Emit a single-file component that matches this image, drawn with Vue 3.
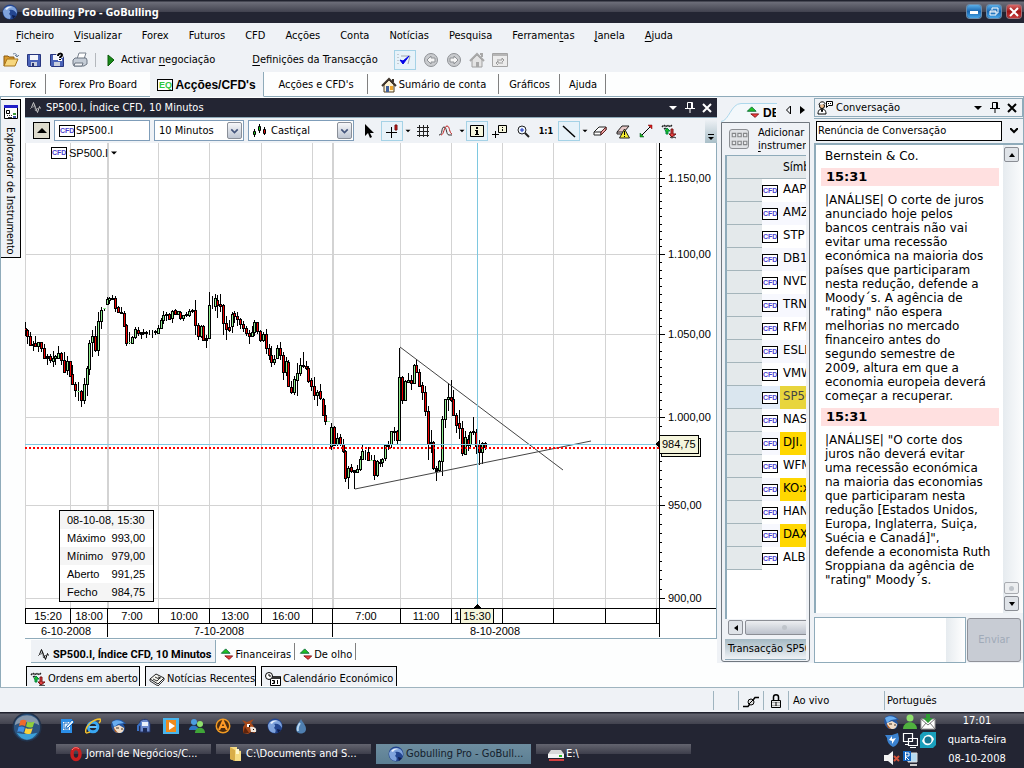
<script setup>
import { h, ref } from 'vue'

const shapes = {
  globe: '<circle cx="8" cy="8" r="7.5" fill="#23458f"/><path d="M1 7c2-5 7-6 11-4 3 2 3 5 3 7-2-4-5-5-8-4 2 1 1 3 0 4 2 1 2 3 1 5C4 15 1 12 1 7z" fill="#7fa3dc"/><path d="M3 5c2-3 6-3 8-2-3 0-5 1-6 3z" fill="#e6eefb"/><path d="M10 11l4 1-3 3z" fill="#0d1d4d"/>',
  folder: '<path d="M1 14V4h4l1 1h5v3" fill="#d99a2c" stroke="#8a5a10"/><path d="M1 14l3-7h11l-3 7z" fill="#f7d77e" stroke="#a87418"/><path d="M10 2c2-1 4 0 4 2m-2-1l2 2 2-2" fill="none" stroke="#6b7f9a"/>',
  disk: '<path d="M1.500 2.500h13v12h-12l-1-1z" fill="#4a63b8" stroke="#27357e"/><path d="M4 3h8v5H4z" fill="#f4f6fb"/><path d="M5 10h6v4H5z" fill="#c9cfdd"/><path d="M6 11h2v3H6z" fill="#28346f"/>',
  diskq: '<path d="M1.500 2.500h13v12h-12l-1-1z" fill="#4a63b8" stroke="#27357e"/><path d="M4 3h8v5H4z" fill="#f4f6fb"/><path d="M5 10h6v4H5z" fill="#c9cfdd"/><path d="M9 4c0-3 4-3 4-1 0 2-2 1-2 3m0 1v2" stroke="#fff" stroke-width="4" fill="none"/><path d="M9 4c0-3 4-3 4-1 0 2-2 1-2 3m0 1v1" stroke="#000" stroke-width="2" fill="none"/>',
  printer: '<path d="M5 7l2-6h7l-2 6" fill="#fff" stroke="#78828e"/><path d="M1 8l2-2h11l1 2v4l-3 2H2l-1-2z" fill="#c4ccd6" stroke="#6d7683"/><path d="M3 11h8l-1 3H2z" fill="#f2f4f7" stroke="#6d7683"/>',
  play: '<path d="M5 3l6 5-6 6z" fill="#188a18" stroke="#0a5a0a"/>',
  check: '<path d="M1 2v1m0 2v1m0 2v1m0 2v1M4 4h9l-2 8" stroke="#a0a4aa" fill="none"/><path d="M3 8l3 4 6-8-6 5z" fill="#0000e8" stroke="#0000e8"/>',
  back: '<circle cx="8" cy="8" r="6.500" fill="#c9cbce" stroke="#8f9296"/><path d="M4 8l4-4v2h4v4H8v2z" fill="#f5f5f5" stroke="#8f9296"/>',
  fwd: '<circle cx="8" cy="8" r="6.500" fill="#c9cbce" stroke="#8f9296"/><path d="M12 8L8 4v2H4v4h4v2z" fill="#f5f5f5" stroke="#8f9296"/>',
  homeg: '<path d="M3 8v7h10V8L8 3z" fill="#e4e4e4" stroke="#a0a0a0"/><path d="M1 9l7-7 7 7M11 2h2v3" stroke="#a8a8a8" stroke-width="2" fill="none"/><path d="M7 10h3v5H7z" fill="#a8a8a8"/>',
  refresh: '<path d="M.5 1.500h15v13H.5z" fill="#ececec" stroke="#a4a4a4"/><path d="M1 2h14v2H1z" fill="#b6b6b6"/><path d="M5 8h5V6l2 2-2 2M11 11H6V9l-2 2 2 2" stroke="#9a9a9a" fill="none"/>',
  home: '<path d="M3 8v7h10V8L8 3z" fill="#fff3d2" stroke="#4a3a20"/><path d="M1 9l7-7 7 7M12 2v3" stroke="#3e352c" stroke-width="2" fill="none"/><path d="M5 9h3v6H5z" fill="#3f5f9a"/><path d="M9 9h3v4H9z" fill="#efa52a"/>',
  wave: '<path d="M3.500 8.500l1-1 2-5 2 5 2 5 2-6 1 2" fill="none" stroke="currentColor"/><path d="M5.500 8l2-3 1 6 2-3 1 2" fill="none" stroke="currentColor" opacity=".5"/>',
  pin: '<path d="M5.500 2.500h5v6h-5zM9.500 2v6M3 8.500h10M8 9v4" fill="none" stroke="currentColor"/>',
  close: '<path d="M4 4l8 8M12 4l-8 8" stroke="currentColor" stroke-width="2"/>',
  caret: '<path d="M4 6h8l-4 4z" fill="currentColor"/>',
  up: '<path d="M3 10h10L8 5z" fill="#000"/>',
  down: '<path d="M4 6l4 4 4-4" stroke="#44557c" stroke-width="2" fill="none"/>',
  candles: '<path d="M3.500 6v8M8.500 1v9M13.500 4v8" stroke="#000"/><path d="M7.500 3.500h2v4h-2zM2.500 8.500h2v3h-2z" fill="#19c819" stroke="#000"/><path d="M12.500 6.500h2v4h-2z" fill="#e01010" stroke="#000"/>',
  pointer: '<path d="M4 1v12l3-3 2 5 2-1-2-4h4z" fill="#000"/>',
  cross: '<path d="M7.500 4v11M2 9.500h11" stroke="#000"/><path d="M11 2h2v5h-2z" fill="#d81818" stroke="#701010"/>',
  grid: '<path d="M4.500 2v12M8.500 2v12M12.500 2v12M2 4.500h12M2 8.500h12M2 12.500h12" stroke="#222"/>',
  waves: '<path d="M1 12c4 0 2-8 5-8s2 8 5 8h3" fill="none" stroke="#333"/><path d="M3 12c3 0 3-9 6-9s2 7 5 8" fill="none" stroke="#c02020"/>',
  info: '<path d="M1.500 2.500h13v11h-13z" fill="#f5f5dc" stroke="#000"/><path d="M7 4h2v2H7zM6 7h3v4h1v1H6v-1h1V8H6z" fill="#000"/>',
  boxinfo: '<path d="M6.500 2.500h8v7h-8z" fill="#f5f5dc" stroke="#000"/><path d="M10.500 4v1m0 1v2" stroke="#000"/><path d="M3.500 8v7M0 11.500h7" stroke="#000"/>',
  zoom: '<circle cx="7" cy="7" r="4" fill="#eef6ff" stroke="#222"/><path d="M10 10l4 4" stroke="#222" stroke-width="2"/><path d="M5 7h4M7 5v4" stroke="#1530c0"/>',
  line: '<path d="M2 3l12 11" stroke="#000" stroke-width="1.500"/>',
  eraser: '<path d="M2 9l5-5h7l-5 5zM2 9v3h7l5-5V4M9 9v3" fill="#fff" stroke="#222"/><path d="M9 9l5-5v3l-5 5z" fill="#e8a0a0" stroke="#602020"/>',
  erasewarn: '<path d="M2 9l5-6h7l-5 6zM2 9v2h7" fill="#e8c8c8" stroke="#222"/><path d="M9.500 6l5 9h-10z" fill="#f6ee30" stroke="#222"/><path d="M9.500 8v4m0 1v1" stroke="#000"/>',
  arrows: '<path d="M3 13L13 3" stroke="#000"/><path d="M10 2h4v4z" fill="#d81818" stroke="#711" stroke-width=".5"/><path d="M2 10v4h4z" fill="#18a818" stroke="#052" stroke-width=".5"/>',
  trends: '<path d="M1 4l2-2 2 2 2-2 2 2 2-2M3 6l2-1 2 2" fill="none" stroke="#222" stroke-width="1.500" stroke-dasharray="2 1"/><path d="M4 8l2-3 3 3H7v3H5V8z" fill="#20c020" stroke="#084"/><path d="M10 6h2v5h3l-4 3-3-3h2z" fill="#e04040" stroke="#711"/><path d="M9 14l2 1 2-1 2 1" fill="none" stroke="#222"/>',
  updown: '<path d="M6.500 1l5 5h-10z" fill="#22c322" stroke="#063"/><path d="M10.500 13l4-4h-9z" fill="#f04040" stroke="#711"/>',
  explorer: '<path d="M1.500 1.500h13v13h-13z" fill="#fff" stroke="#000"/><path d="M1 1h14v3H1z" fill="#2020c8"/><path d="M3.500 6.500h3v3h-3z" fill="none" stroke="#000"/><path d="M4 11.500h1m1 0h1m1 0h1M5 13.500h4" stroke="#333"/><path d="M10 9h3v2h-3z" fill="#3a9a3a"/><path d="M10 12h3v2h-3z" fill="#3a50a0"/>',
  chat: '<circle cx="5" cy="6" r="2.500" fill="#f0c090" stroke="#000"/><path d="M2 5c0-4 6-4 6-1M1 14c0-4 2-5 4-5s4 1 4 5zM4 9l1 3 1-3" fill="#fff" stroke="#000"/><path d="M9.500 1.500h6v4h-4l-2 2z" fill="#fff" stroke="#000"/><path d="M11 3.500h4" stroke="#000" stroke-dasharray="1 1"/>',
  gridbtn: '<path d="M2 3h3v3H2zM7 3h3v3H7zM12 3h3v3h-3zM2 10h3v3H2zM7 10h3v3H7zM12 10h3v3h-3z" fill="#e9eaec" stroke="#858789"/>',
  plug: '<path d="M0 13.500h5l7-9h4" fill="none" stroke="#000" stroke-width="1.500"/><circle cx="8" cy="9" r="3" fill="#ddd" stroke="#000"/><path d="M6 11l4-4" stroke="#000"/>',
  lock: '<path d="M3.500 7.500h9v7h-9z" fill="#e8e8e8" stroke="#000"/><path d="M5.500 7V4c0-3 5-3 5 0v3" fill="none" stroke="#000" stroke-width="1.500"/><path d="M4 9.500h8M4 12.500h8" stroke="#aaa"/><path d="M7.500 9h1v4h-1z"/>',
  news: '<path d="M1 8l6-5 8 4-6 6z" fill="#f6f6f0" stroke="#222"/><path d="M1 8v2l8 5 6-6V7M4 8l4 2M6 6l4 2M9 6l3 1M8 10l3-3" fill="none" stroke="#333"/>',
  calendar: '<path d="M5.500 5.500h10v9h-10z" fill="#fff" stroke="#000"/><path d="M6 5h9v3H6z" fill="#333"/><circle cx="4" cy="5" r="3.500" fill="#fff" stroke="#000"/><path d="M4 3v2h2M7 9.500h2.500v3H7m1-1.500h1M12.500 9v4" stroke="#000" fill="none"/>',
  orb: '<circle cx="8" cy="8" r="7.800" fill="#22324a"/><circle cx="8" cy="8" r="7" fill="#2b5480"/><path d="M1.500 7C2 0 14 0 14.500 7 11 5 5 5 1.500 7z" fill="#8597ab"/><path d="M2.500 11c3 5 8 5 11 0-3 1-8 1-11 0z" fill="#3ba0d8"/><path d="M4.500 4.500c1.500-.6 2-.4 3.200.2L7 7.600c-1-.6-2-.6-3.300-.2z" fill="#ee6a2c"/><path d="M8.200 5c1.200.6 2.200.6 3.800 0l-.9 3c-1.300.5-2.500.3-3.600-.3z" fill="#8fcf3c"/><path d="M3.500 8c1.400-.5 2.300-.4 3.300.3L6 11c-1-.6-2-.7-3.200-.3z" fill="#3f8fe8"/><path d="M7.300 8.500c1.200.6 2.300.6 3.700.1l-.9 2.800c-1.300.5-2.500.4-3.600-.2z" fill="#fbd23a"/>',
  mail: '<path d="M2 1h11v14H2z" fill="#2b8ee8"/><path d="M4 4h7v8H4z" fill="#fff"/><path d="M9 5H5v6h5M7 9l6-7 2 2-6 6H7z" fill="#dff0ff" stroke="#1668bd"/>',
  ie: '<circle cx="8" cy="9" r="4.800" fill="none" stroke="#39a7f2" stroke-width="3"/><path d="M4 9h8" stroke="#63c2ff" stroke-width="2"/><path d="M1 15C-1 9 8 1 15 1c1 1 0 3-1 4M1 15c2 0 3-1 4-1" fill="none" stroke="#f3c02c" stroke-width="1.500"/>',
  bird: '<path d="M1 4c3-4 10-4 14 2l-3 0c3 3 2 7-1 9H5C1 13-1 8 1 4z" fill="#24559f"/><path d="M1 4c4-3 9-2 12 1l-6 1-4 3z" fill="#68adf0"/><path d="M3 9l5-2 5 3c0 3-2 5-5 5s-5-3-5-6z" fill="#f1dcc6"/><path d="M5 10h3m2 1h2" stroke="#432"/><path d="M2 9l2 5 3 1z" fill="#ae5c22"/>',
  save: '<path d="M3 3c5-3 9-2 10 3v8H3z" fill="#6c89cc" stroke="#22356b"/><path d="M5 4h6v4H5z" fill="#eaf0fa"/><path d="M6 10h4v4H6z" fill="#1d2b57"/><path d="M1 13V8l3-3" stroke="#3970c4" stroke-width="2" fill="none"/>',
  media: '<path d="M0 0h16v16H0z" fill="#49b5ec"/><path d="M3 2h10v12H3z" fill="#ef8a1c"/><path d="M6 4l6 4-6 4z" fill="#fff"/>',
  people: '<circle cx="5" cy="4" r="3" fill="#4d9fe0"/><path d="M0 12c0-6 9-6 10 0z" fill="#2e77c4"/><circle cx="11" cy="6" r="3" fill="#8fe06d"/><path d="M6 15c0-7 10-7 10 0z" fill="#3fa538"/>',
  orangea: '<circle cx="8" cy="8" r="7.500" fill="#f09a22"/><circle cx="8" cy="8" r="6" fill="#4c2c10"/><path d="M4 12l4-9 4 9M6 9h4" fill="none" stroke="#ff9c28" stroke-width="2"/>',
  donkey: '<path d="M2 15V9l2-3-3-4 5 2 7-3-3 4 2 2 2 4v4l-4-1-3 2z" fill="#a5481a"/><path d="M2 15l2-6 4 6z" fill="#5e240c"/><path d="M9 9c4-1 7 1 6 5l-5 0z" fill="#f1e6dc"/><path d="M6 6h3v3H6z" fill="#fff"/><path d="M8 7h1v2H8zM12 11h1v1h-1z" fill="#000"/>',
  drop: '<path d="M8 1c2 4 5 6 5 10 0 6-10 6-10 0 0-4 3-6 5-10z" fill="#4f7fb0"/><path d="M7 5c-2 3-3 5-2 8" stroke="#b9d6f0" stroke-width="2" fill="none"/>',
  opera: '<ellipse cx="8" cy="8" rx="4" ry="5.500" fill="none" stroke="#c81f1f" stroke-width="3.500"/><path d="M4 4c2-3 5-3 7-1" stroke="#ff8080" fill="none"/>',
  dir: '<path d="M2 1h7v3l4 1v10H7l-5-2z" fill="#f6dc84"/><path d="M2 1l5 3v11l-5-2z" fill="#d9ad48"/><path d="M8 3h3v5H8z" fill="#fff6cc"/>',
  drive: '<path d="M3 4h10l3 4v4H0V8z" fill="#d9d9d9"/><path d="M0 8h16v4H0z" fill="#f5f5f5"/><path d="M11 9h3v2h-3z" fill="#28b428"/><path d="M1 14h15" stroke="#d34040" stroke-width="2"/>',
  man: '<circle cx="8" cy="4" r="3.500" fill="#8fdf6d"/><path d="M1 15c0-9 14-9 14 0z" fill="#4fb13e"/>',
  inbox: '<path d="M1 5h14v10H1z" fill="#fff" stroke="#999"/><path d="M1 5l7 6 7-6M1 15l5-6m9 6l-5-6" fill="none" stroke="#777"/><path d="M6 0h4v4h3L8 9 3 4h3z" fill="#2f9b35"/>',
  shield: '<path d="M1 3l7 0 6-2 1 5c0 5-3 8-6 9-4-2-6-5-6-9z" fill="#3b82d0"/><path d="M5 8l3-4v3l4-1-4 6V9z" fill="#fff"/>',
  screens: '<path d="M1.500 1.500h9v8h-9zM3 12.500h4M6.500 6.500h9v7h-9zM8 15.500h6" fill="#232533" stroke="#fff" stroke-width="1.200"/>',
  eye: '<path d="M3 0h13v13l-3 3H0V3z" fill="#1aa0bd"/><path d="M2 9c3-8 9-8 12-2-3 8-9 8-12 2z" fill="#fff"/><circle cx="8" cy="8" r="3.500" fill="#147691"/>',
  mute: '<path d="M0 5h4l5-4v14l-5-4H0z" fill="#f2f2f2"/><path d="M10 6l5 5m0-5l-5 5" stroke="#d3523a" stroke-width="2"/>',
  pc: '<path d="M6 3h9v9H6z" fill="#b6dcf2" stroke="#ddd"/><path d="M8 14h7v2H8z" fill="#ccc"/><path d="M1 1h8v10H1z" fill="#1263c0"/><path d="M3.500 2v8M3 3h4v3H3l4 4" stroke="#fff" fill="none"/>',
}
const Icon = (p) =>
  h('svg', { viewBox: '0 0 16 16', width: p.size || 16, height: p.size || 16, 'aria-hidden': 'true', innerHTML: shapes[p.name] })
Icon.props = ['name', 'size']

const menus = [['', 'F', 'icheiro'], ['', 'V', 'isualizar'], ['Forex'], ['Futuros'], ['CFD'], ['Acções'], ['Conta'], ['Notícias'], ['Pesquisa'], ['Ferramen', 't', 'as'], ['', 'J', 'anela'], ['', 'A', 'juda']]

const instrument = ref('SP500.I')
const period = ref('10 Minutos')
const style = ref('Castiçal')
const channel = ref('Renúncia de Conversação')
const message = ref('')

const rows = [
  { s: 'AAPL' }, { s: 'AMZN' }, { s: 'STP' }, { s: 'DB1' }, { s: 'NVDA' }, { s: 'TRN' }, { s: 'RFMD' }, { s: 'ESLR' }, { s: 'VMW' },
  { s: 'SP500', c: 'sel' }, { s: 'NAS' }, { s: 'DJI.', c: 'hot' }, { s: 'WFM' }, { s: 'KO:x', c: 'hot' }, { s: 'HAN' }, { s: 'DAX', c: 'hot' }, { s: 'ALB' },
]

// Each candle: x, high, low, body top, body bottom, kind (r falling, g rising, k flat). Three units to a pixel.
const early = `17 128 168 145 150 r,22 148 192 150 170 r,31 157 197 170 195 r,40 185 215 192 196 k,46 168 202 190 200 r,55 186 218 187 200 g,64 186 216 188 206 r,73 193 236 205 234 r,82 222 255 228 234 k,91 222 250 230 242 r,100 213 263 235 245 g,106 225 255 230 236 g,115 200 236 220 234 g,124 216 255 219 241 r,133 216 278 240 276 r,142 228 285 244 272 g,151 243 293 244 288 r,157 255 315 283 312 r,166 306 353 312 332 r,175 308 364 333 334 g,184 330 383 333 362 r,193 294 372 313 362 g,202 260 348 265 313 g,208 180 285 190 268 g,217 150 232 170 188 g,226 140 217 170 212 r,235 98 230 124 212 g,244 82 147 91 124 g,253 85 93 85 86 g,262 53 77 57 73 g,268 52 72 54 62 g,277 45 60 54 58 k,286 50 97 54 85 r,295 78 101 82 97 r,304 82 104 96 100 k,313 93 141 100 139 r,319 133 198 136 191 r,328 158 194 186 187 g,337 170 194 172 190 g,346 141 177 148 172 g,355 143 170 150 160 r,364 157 179 158 162 k,370 148 165 157 160 k,379 155 174 157 161 k,388 150 165 157 157 k,397 150 174 157 157 k,406 152 167 154 158 k,415 136 162 145 160 g,424 115 147 121 146 g,430 95 132 105 122 g,439 96 124 103 106 k,448 100 120 103 119 r,457 90 130 94 116 g,466 89 107 92 104 r,475 93 107 95 104 g,481 94 120 96 116 r,490 105 125 106 116 g,499 97 113 104 107 k,508 88 112 94 105 g,517 88 100 92 95 k,526 60 166 92 136 r,535 130 182 136 168 r,544 135 175 138 168 g,550 135 182 140 180 r,559 165 204 176 180 k,568 36 178 76 176 g,577 48 88 60 60 k,586 43 94 54 80 g,592 46 116 62 77 r,601 44 96 73 80 r,610 74 165 76 130 r,619 110 180 130 148 r,628 120 157 142 150 r,637 96 160 103 138 g,643 95 130 100 108 r,652 98 140 108 118 r,661 115 148 118 134 r,670 125 156 134 146 r,679 140 170 145 160 r,688 150 194 160 170 r,697 138 172 157 170 g,703 120 168 128 157 g,712 126 163 128 155 r`
const late = `61 150 186 153 182 r,70 158 186 162 180 g,79 147 222 162 206 r,88 192 240 206 226 r,94 200 261 226 247 r,103 225 256 237 248 g,112 195 238 204 236 g,121 187 240 204 226 r,130 218 302 226 277 r,139 232 290 244 277 g,146 242 322 246 320 r,154 305 342 321 338 r,163 290 346 298 336 g,172 250 350 280 300 g,181 234 290 255 280 g,190 216 264 255 260 k,199 243 272 258 265 r,205 258 311 265 305 r,214 294 335 301 320 r,223 292 360 320 345 r,232 330 378 338 345 g,241 312 362 334 355 r,250 354 410 358 406 r,256 375 435 406 425 r,265 424 427 424 425 g,274 430 510 442 500 g,283 440 500 442 495 r,292 460 500 475 492 g,301 462 500 473 494 r,310 478 520 494 515 r,316 510 607 515 596 r,325 560 628 565 592 g,334 552 580 562 574 r,343 570 628 572 577 k,352 556 580 568 576 g,361 530 575 538 568 g,367 495 542 514 538 g,376 510 540 520 520 k,385 502 545 517 541 r,394 527 545 540 541 g,403 527 600 541 587 r,412 540 592 545 587 g,421 538 562 546 550 r,427 534 563 539 548 g,436 492 543 496 536 g,445 484 510 492 498 k,454 453 505 455 492 g,463 441 484 453 458 k,472 450 495 455 482 r,478 204 485 292 482 g,487 290 372 292 362 r,496 300 363 305 362 g,505 280 310 300 306 g,514 286 332 302 311 r,523 253 312 256 310 g,529 238 280 256 278 r,538 268 322 277 318 r,547 306 360 316 338 r,556 318 410 338 394 r,565 380 540 394 492 r,574 450 520 486 492 k,580 485 570 488 566 r,589 558 605 564 573 k,598 540 578 545 570 g,607 408 588 418 545 g,616 357 445 358 419 g,625 310 395 352 358 g,634 300 368 353 360 r,640 330 410 358 406 r,649 400 460 406 436 r,658 390 478 430 446 r,667 424 530 445 521 r,676 455 525 473 522 g,685 465 515 478 495 r,691 455 508 457 492 g,700 411 465 455 458 k,709 448 522 457 500 r,718 480 557 492 517 r,727 487 552 490 517 g,736 487 512 490 502 r`
const px = (v) => Math.floor(v / 3)
const ink = { k: '', r: '', g: '' }
const box = (x, y, w, hh) => `M${x} ${y}h${w}v${hh}h${-w}z`
for (const [src, x0] of [[early, 20], [late, 240]]) {
  for (const item of src.split(',')) {
    const t = item.split(' ')
    const [x, hi, lo, top, bot] = [x0 + px(t[0]), ...t.slice(1, 5).map((v) => 280 + px(v))]
    ink.k += box(x, hi, 1, lo - hi)
    if (top === bot && t[5] === 'k') continue
    if (bot - top < 1) ink.g += box(x - 1, top, 3, 1)
    else {
      ink.k += box(x - 1, top, 3, bot - top + 1)
      if (t[5] !== 'k' && bot - top > 1) ink[t[5]] += box(x, top + 1, 1, bot - top - 1)
    }
  }
}

const cols = [70, 158, 209, 261, 312, 400, 451, 502, 553, 605, 656]
const prices = [[178, '1.150,00'], [254, '1.100,00'], [334, '1.050,00'], [417, '1.000,00'], [505, '950,00'], [598, '900,00']]
let ticks = ''
prices.forEach(([y], i) => {
  ticks += `M659 ${y}h6v1h-6z`
  const next = i < 5 ? prices[i + 1][0] : 606
  const step = i < 5 ? (next - y) / 10 : 10
  for (let n = 1; y + n * step < next; n++) ticks += `M659 ${Math.round(y + n * step)}h3v1h-3z`
})
for (let y = 171; y > 145; y -= 7) ticks += `M659 ${y}h3v1h-3z`
const times = [[48, '15:20'], [89, '18:00'], [132, '7:00'], [184, '10:00'], [235, '13:00'], [286, '16:00'], [366, '7:00'], [426, '11:00']]
const quick = ['mail', 'ie', 'bird', 'save', 'media', 'people', 'orangea', 'donkey', 'globe', 'drop']
const tasks = [['opera', 'Jornal de Negócios/C...'], ['dir', 'C:\\Documents and S...'], ['globe', 'Gobulling Pro - GoBull...'], ['drive', 'E:\\']]
const ohlc = [['Máximo', '993,00'], ['Mínimo', '979,00'], ['Aberto', '991,25'], ['Fecho', '984,75']]
</script>

<template>
  <div class="desk">
    <header class="title">
      <Icon name="globe" /><strong>Gobulling Pro - GoBulling</strong>
      <div class="winbtns">
        <button aria-label="Minimizar"><svg width="10" height="10"><path d="M1 4h8v3H1z" fill="#fff" /></svg></button>
        <button aria-label="Restaurar"><svg width="10" height="10"><path d="M3 3V1h6v5H7M1 4h6v4H1zM1 5h6" fill="none" stroke="#fff" /></svg></button>
        <button class="red" aria-label="Fechar"><svg width="10" height="10"><path d="M1 1l8 8M9 1l-8 8" stroke="#fff" stroke-width="2" /></svg></button>
      </div>
    </header>

    <nav class="menu">
      <button v-for="m in menus" :key="m.join('')"><span>{{ m[0] }}<u v-if="m[1]">{{ m[1] }}</u>{{ m[2] }}</span></button>
    </nav>

    <div class="bar">
      <button aria-label="Abrir"><Icon name="folder" /></button>
      <button aria-label="Guardar"><Icon name="disk" /></button>
      <button aria-label="Guardar como"><Icon name="diskq" /></button>
      <button aria-label="Imprimir"><Icon name="printer" /></button>
      <i class="sep"></i>
      <button class="label"><Icon name="play" /><span>Activar <u>n</u>egociação</span></button>
      <button class="label defs"><span><u>D</u>efinições da Transacção</span></button>
      <button class="on" aria-label="Confirmar"><Icon name="check" /></button>
      <button aria-label="Anterior"><Icon name="back" /></button>
      <button aria-label="Seguinte"><Icon name="fwd" /></button>
      <button aria-label="Início"><Icon name="homeg" /></button>
      <button aria-label="Actualizar"><Icon name="refresh" /></button>
    </div>

    <nav class="views">
      <button class="v-first">Forex</button>
      <button class="v-board nosep">Forex Pro Board</button>
      <button class="v-active"><span class="eq">EQ</span><b>Acções/CFD's</b></button>
      <button class="v-board">Acções e CFD's</button>
      <button class="v-wide"><Icon name="home" /> Sumário de conta</button>
      <button class="v-mid">Gráficos</button>
      <button class="v-first">Ajuda</button>
      <i></i>
    </nav>

    <main class="main">
      <aside class="side">
        <button class="vtab"><Icon name="explorer" /><span>Explorador de Instrumento</span></button>
      </aside>

      <section class="chartdock">
        <div class="dockhead dark">
          <Icon name="wave" /><span>SP500.I, Índice CFD, 10 Minutos</span>
          <div class="dockbtns"><button aria-label="Menu"><Icon name="caret" /></button><button aria-label="Fixar"><Icon name="pin" /></button><button aria-label="Fechar"><Icon name="close" /></button></div>
        </div>
        <div class="charttools">
          <button class="upbtn" aria-label="Subir"><Icon name="up" /></button>
          <label class="field instr"><span class="cfd">CFD</span><input v-model="instrument" aria-label="Instrumento" /></label>
          <label class="field per"><select v-model="period" aria-label="Período"><option>10 Minutos</option></select><span class="drop"><Icon name="down" /></span></label>
          <label class="field sty"><Icon name="candles" /><select v-model="style" aria-label="Estilo"><option>Castiçal</option></select><span class="drop"><Icon name="down" /></span></label>
          <div class="tools">
            <button aria-label="Ponteiro"><Icon name="pointer" /></button>
            <button class="on" aria-label="Mira"><Icon name="cross" /></button>
            <button class="mini" aria-label="Opções da mira"><Icon name="caret" size="10" /></button>
            <button aria-label="Grelha"><Icon name="grid" /></button>
            <button aria-label="Indicadores"><Icon name="waves" /></button>
            <button class="mini" aria-label="Mais indicadores"><Icon name="caret" size="10" /></button>
            <button class="on" aria-label="Informação"><Icon name="info" /></button>
            <button aria-label="Dados"><Icon name="boxinfo" /></button>
            <button aria-label="Ampliar"><Icon name="zoom" /></button>
            <button class="one">1:1</button>
            <button class="on" aria-label="Linha"><Icon name="line" /></button>
            <button class="mini" aria-label="Mais linhas"><Icon name="caret" size="10" /></button>
            <button aria-label="Apagar"><Icon name="eraser" /></button>
            <button aria-label="Apagar tudo"><Icon name="erasewarn" /></button>
            <button aria-label="Setas"><Icon name="arrows" /></button>
            <button aria-label="Ordens"><Icon name="trends" /></button>
          </div>
          <button class="more" aria-label="Mais"><svg width="8" height="8"><path d="M1 1.500h6" stroke="#000" /><path d="M1 4h6L4 7z" /></svg></button>
        </div>

        <div class="chart">
          <svg class="plot" viewBox="25 143 691 495" shape-rendering="crispEdges" role="img" aria-label="SP500.I">
            <g fill="#d3d3d3">
              <rect x="25" y="143" width="1" height="465" />
              <rect v-for="c in cols" :key="c" :x="c" y="143" width="1" height="465" />
              <rect x="107" y="143" width="2" height="465" /><rect x="332" y="143" width="2" height="465" />
              <rect v-for="p in prices" :key="p[0]" x="25" :y="p[0]" width="634" height="1" />
            </g>
            <path :d="ink.k" fill="#000" /><path :d="ink.r" fill="#f00000" /><path :d="ink.g" fill="#90ee90" />
            <g stroke="#444" shape-rendering="auto"><path d="M400 347L563 470" /><path d="M355 489L591 441" /></g>
            <path d="M25 448H659" stroke="#f00" stroke-width="2" stroke-dasharray="2 2" />
            <path d="M25 444.500H659M477.500 143V608" stroke="#7ec8e0" />
            <g fill="none" stroke="#000">
              <path d="M25 608.500H717M25 623.500H659M659.500 143V637M25.500 608V623M107.500 608V637M332.500 608V637" />
              <path v-for="c in cols" :key="c" :d="`M${c + 0.5} 608v15`" />
            </g>
            <path :d="ticks" />
            <g class="num">
              <text v-for="p in prices" :key="p[1]" x="668" :y="p[0] + 4">{{ p[1] }}</text>
              <g text-anchor="middle">
                <text v-for="t in times" :key="t[0]" :x="t[0]" y="620">{{ t[1] }}</text>
                <text x="457" y="620">1</text>
                <text x="66" y="635">6-10-2008</text><text x="219" y="635">7-10-2008</text><text x="495" y="635">8-10-2008</text>
              </g>
              <rect x="661.500" y="438.500" width="39" height="18" fill="#f5f5dc" stroke="#000" />
              <rect x="659.500" y="435.500" width="39" height="18" fill="#f5f5dc" stroke="#000" />
              <path d="M655 444l4-4v8z" />
              <text x="662" y="448">984,75</text>
              <rect x="460.500" y="608.500" width="33" height="15" fill="#f5f5dc" stroke="#000" />
              <path d="M473 608l4-4 4 4z" />
              <text x="477" y="620" text-anchor="middle">15:30</text>
            </g>
          </svg>
          <button class="legend"><span class="cfd">CFD</span>SP500.I<Icon name="caret" size="12" /></button>
          <table class="tip">
            <tbody>
              <tr><th colspan="2">08-10-08, 15:30</th></tr>
              <tr v-for="o in ohlc" :key="o[0]"><td>{{ o[0] }}</td><td>{{ o[1] }}</td></tr>
            </tbody>
          </table>
        </div>

        <nav class="doctabs">
          <button class="act"><Icon name="wave" />SP500.I, Índice CFD, 10 Minutos</button>
          <button><Icon name="updown" size="14" />Financeiras</button>
          <button><Icon name="updown" size="14" />De olho</button>
        </nav>
        <nav class="mintabs">
          <button class="m1"><Icon name="trends" />Ordens em aberto</button>
          <button class="m2"><Icon name="news" />Notícias Recentes</button>
          <button class="m3"><Icon name="calendar" />Calendário Económico</button>
        </nav>
      </section>

      <section class="list">
        <div class="listtabs">
          <svg class="slope" width="56" height="19"><path d="M0 18.500C8 18 10 0.500 20 0.500H56V19H0z" fill="#f3f8fb" /><path d="M0 18.500C8 18 10 0.500 20 0.500H56" fill="none" stroke="#add8ec" /></svg>
          <button class="tabname"><Icon name="updown" size="14" /><b>DE OLHO</b></button>
          <div class="arrows"><button aria-label="Anterior"><svg width="6" height="10"><path d="M5.500 1v8l-4-4z" fill="none" stroke="#000" /></svg></button><button aria-label="Seguinte"><svg width="6" height="10"><path d="M1 1v8l5-4z" /></svg></button></div>
        </div>
        <div class="listbody">
          <button class="add"><span class="addicon"><Icon name="gridbtn" size="18" /></span><span>Adicionar<br /><u>i</u>nstrumento</span></button>
          <div class="grid">
            <table>
              <colgroup><col class="w0" /><col class="w1" /><col /></colgroup>
              <thead><tr><th class="c0"></th><th colspan="2">Símbolo</th></tr></thead>
              <tbody>
                <tr v-for="r in rows" :key="r.s" :class="r.c"><td class="c0"></td><td class="c1"><span class="cfd">CFD</span></td><td class="c2">{{ r.s }}</td></tr>
              </tbody>
            </table>
          </div>
          <div class="hscroll"><button aria-label="Esquerda"><svg width="8" height="8"><path d="M6 1v6L2 4z" /></svg></button><span><i></i></span></div>
          <div class="foot">Transacção SP500.I</div>
        </div>
      </section>

      <section class="conv">
        <div class="dockhead light">
          <Icon name="chat" /><span>Conversação</span>
          <div class="dockbtns"><button aria-label="Menu"><Icon name="caret" /></button><button aria-label="Fixar"><Icon name="pin" /></button><button aria-label="Fechar"><Icon name="close" /></button></div>
        </div>
        <label class="chan"><select v-model="channel" aria-label="Canal"><option>Renúncia de Conversação</option></select><svg width="8" height="6"><path d="M0 0l4 4 4-4" fill="none" stroke="#000" stroke-width="2" /></svg></label>
        <div class="log">
          <div class="msgs">
            <p>Bernstein &amp; Co.</p>
            <h4>15:31</h4>
            <p>|ANÁLISE| O corte de juros<br />anunciado hoje pelos<br />bancos centrais não vai<br />evitar uma recessão<br />económica na maioria dos<br />países que participaram<br />nesta redução, defende a<br />Moody´s. A agência de<br />"rating" não espera<br />melhorias no mercado<br />financeiro antes do<br />segundo semestre de<br />2009, altura em que a<br />economia europeia deverá<br />começar a recuperar.</p>
            <h4>15:31</h4>
            <p>|ANÁLISE| "O corte dos<br />juros não deverá evitar<br />uma recessão económica<br />na maioria das economias<br />que participaram nesta<br />redução [Estados Unidos,<br />Europa, Inglaterra, Suiça,<br />Suécia e Canadá]",<br />defende a economista Ruth<br />Sroppiana da agência de<br />"rating" Moody´s.</p>
          </div>
          <div class="vscroll">
            <button aria-label="Subir"><svg width="8" height="8"><path d="M1 6h6L4 2z" /></svg></button>
            <span class="thumb"><i></i></span>
            <button aria-label="Descer"><svg width="8" height="8"><path d="M1 2h6L4 6z" /></svg></button>
          </div>
        </div>
        <form class="send" @submit.prevent><textarea v-model="message" aria-label="Mensagem"></textarea><button disabled>Enviar</button></form>
      </section>
    </main>

    <footer class="status">
      <span class="s"></span><span class="s"><Icon name="plug" /></span><span class="s"><Icon name="lock" /></span><span class="s live">Ao vivo</span><span class="lang">Português</span>
    </footer>

    <div class="taskbar">
      <button class="orb" aria-label="Iniciar"><Icon name="orb" size="30" /></button>
      <div class="tmain">
        <div class="quick"><button v-for="q in quick" :key="q" :aria-label="q"><Icon :name="q" /></button></div>
        <div class="tasks"><button v-for="(t, i) in tasks" :key="t[1]" :class="{ cur: i === 2 }"><Icon :name="t[0]" /><span>{{ t[1] }}</span></button></div>
      </div>
      <div class="tray"><Icon name="bird" /><Icon name="man" /><Icon name="inbox" /><Icon name="shield" /><Icon name="screens" /><Icon name="eye" /><Icon name="mute" /><Icon name="pc" /></div>
      <div class="clock"><span>17:01</span><span>quarta-feira</span><span>08-10-2008</span></div>
    </div>
  </div>
</template>

<style>
body { background: #eff2f6; }
</style>

<style scoped>
* { box-sizing: border-box; }
.desk { min-height: 100vh; display: flex; flex-direction: column; background: #eff2f6; color: #000; font: 11px/14px "DejaVu Sans Condensed", "DejaVu Sans", sans-serif; font-stretch: condensed; white-space: nowrap; }
button, input, select, textarea { font: inherit; color: inherit; margin: 0; padding: 0; border: 0; background: none; border-radius: 0; outline: 0; }
button { display: flex; align-items: center; flex: none; white-space: nowrap; }
svg { display: block; flex: none; }
u { text-underline-offset: 2px; }

.title { height: 23px; display: flex; align-items: center; gap: 4px; padding: 0 3px 0 2px; color: #fff; background: linear-gradient(#20222e 0, #20222e 1px, #6d6e79 2px, #41424f 12px, #232533 12px); font-family: "Noto Sans", sans-serif; }
.winbtns { margin-left: auto; display: flex; gap: 6px; }
.winbtns button { width: 14px; height: 13px; justify-content: center; border-radius: 3px; background: linear-gradient(#5aaee8, #1764ae 50%, #48a6e8); box-shadow: 0 0 0 1px #6c8cab; }
.winbtns .red { background: linear-gradient(#d86a6a, #a01414 50%, #c83c3c); box-shadow: 0 0 0 1px #a07078; }

.menu { height: 24px; display: flex; align-items: center; gap: 20px; padding: 2px 0 0 16px; }
.bar { height: 25px; display: flex; align-items: center; gap: 7px; padding-left: 3px; }
.bar .sep { width: 1px; height: 14px; background: #b4b8bd; }
.bar .label { gap: 2px; }
.bar .defs { margin: 0 9px 0 30px; }
.on { width: 22px; height: 20px; justify-content: center; border: 1px solid #a5d2e6; background: #e7f2f9; }

.views { height: 25px; display: flex; background: #fdfefe; }
.views button { justify-content: center; gap: 2px; padding-top: 2px; border-bottom: 1px solid #8fabba; background: linear-gradient(#808080, #808080) right 2px / 1px 20px no-repeat; }
.views .nosep { background: none; }
.v-first { width: 46px; }
.v-board { width: 104px; }
.v-wide { width: 131px; }
.v-mid { width: 61px; }
.views .v-active { width: 114px; background: #eff2f6; border-bottom-color: #eff2f6; border-right: 1px solid #8fabba; }
.v-active b { font: bold 12px "Liberation Sans", Arial, sans-serif; }
.eq { width: 16px; height: 12px; font: bold 9px/10px "Liberation Sans", sans-serif; border: 1px solid #000; color: #2fc83c; background: #fff; }
.views i { flex: 1; border-bottom: 1px solid #8fabba; }

.main { flex: 1; display: grid; grid-template-columns: 25px minmax(0, 1fr) 93px 214px; border-bottom: 1px solid #9fb4bf; background: #fdfefe; }
.side { border-left: 1px solid #8fabba; padding-top: 2px; }
.vtab { width: 20px; height: 159px; flex-direction: column; gap: 7px; padding-top: 4px; border: 1px solid #000; border-left: 0; background: #eff2f6; }
.vtab span { writing-mode: vertical-rl; font: 10px/14px "Noto Sans", sans-serif; }

.chartdock { display: flex; flex-direction: column; padding-top: 1px; }
.dockhead { height: 19px; display: flex; align-items: center; gap: 3px; padding-left: 2px; flex: none; }
.dark { color: #fff; background: #232533; }
.dark > svg { color: #c8c8c8; }
.light { border: 1px solid #8fabba; }
.dockbtns { margin-left: auto; display: flex; gap: 1px; padding-right: 2px; }
.charttools { height: 26px; display: flex; align-items: center; gap: 4px; padding-left: 8px; border-top: 1px solid #8fabba; background: #eff2f6; }
.upbtn { width: 17px; height: 17px; border: 1px solid #000; background: #dedbcd; }
.field { position: relative; height: 21px; display: flex; align-items: center; border: 1px solid #7f9db9; background: #fff; }
.field input, .field select { min-width: 0; flex: 1; height: 19px; appearance: none; }
.instr { width: 96px; padding-left: 4px; gap: 1px; }
.per { width: 90px; padding-left: 4px; }
.sty { width: 106px; padding-left: 2px; gap: 4px; }
.drop { position: absolute; right: 1px; top: 1px; width: 15px; height: 17px; display: flex; align-items: center; justify-content: center; border: 1px solid #8a8f98; border-radius: 2px; background: linear-gradient(#f6f7f9, #bdc5d2); pointer-events: none; }
.drop svg { width: 13px; }
.tools { display: flex; align-items: center; gap: 1px; }
.tools button { width: 22px; height: 20px; justify-content: center; }
.tools .mini { width: 7px; }
.tools .one { font-weight: bold; font-size: 9px; }
.more { margin-left: auto; width: 12px; height: 24px; align-items: flex-end; justify-content: center; padding-bottom: 2px; background: linear-gradient(#eff2f6, #a9bfc8); }

.cfd { display: block; width: 16px; height: 12px; flex: none; overflow: hidden; border: 1px solid #000; background: #fff; color: #4a3fd0; font: bold 7px/10px "Liberation Sans", Arial, sans-serif; text-align: center; }
.chart { position: relative; border-bottom: 1px solid #8fabba; border-right: 1px solid #8fabba; background: #fff; }
.plot { width: 100%; height: auto; }
.num, .tip { font: 11px "Liberation Sans", Arial, sans-serif; }
.legend { position: absolute; left: 26px; top: 3px; gap: 2px; font: 11px/14px "Liberation Sans", Arial, sans-serif; }
.legend svg { margin-left: -2px; }
.tip { position: absolute; left: 34px; top: 367px; border: 1px solid #000; border-collapse: separate; border-spacing: 0; background: #fff; }
.tip th { font-weight: normal; }
.tip td, .tip th { height: 18px; padding: 0 8px 0 7px; text-align: left; }
.tip td:first-child { padding-right: 6px; }
.tip td:last-child { padding-left: 0; }
.tip tr:nth-child(odd) { background: #f5f5f5; }
.doctabs { display: flex; height: 24px; padding-left: 6px; border-top: 1px solid #fdfefe; }
.doctabs button { gap: 1px; padding: 7px 4px 0 4px; background: linear-gradient(#808080, #808080) right 3px / 1px 17px no-repeat; }
.doctabs .act { font-family: Roboto, "Noto Sans", sans-serif; font-stretch: normal; font-weight: bold; gap: 2px; background: #eff2f6; border-right: 1px solid #8fabba; border-bottom: 1px solid #8fabba; }
.mintabs { display: flex; gap: 5px; margin-top: 3px; padding-left: 1px; }
.mintabs button { height: 20px; overflow: hidden; gap: 2px; padding: 4px 0 0 3px; border: 1px solid #000; border-bottom: 0; background: #eff2f6; }
.m1 { width: 114px; }
.m2 { width: 111px; }
.m3 { width: 136px; }

.list { padding: 6px 0 25px 4px; display: flex; flex-direction: column; background: linear-gradient(#eff2f6, #eff2f6) 0 0 / 100% 566px no-repeat; }
.listtabs { position: relative; height: 19px; display: flex; align-items: center; width: 88px; }
.slope { position: absolute; left: 0; top: 0; }
.tabname { position: relative; width: 55px; overflow: hidden; padding-left: 25px; gap: 3px; }
.tabname b { font: bold 12px "Liberation Sans", sans-serif; }
.arrows { flex: 1; display: flex; gap: 8px; padding: 0 0 5px 9px; }
.listbody { width: 89px; padding: 0 3px 1px 3px; border: 1px solid #70777f; border-radius: 0 0 3px 3px; overflow: hidden; display: flex; flex-direction: column; flex: 1; }
.add { height: 32px; gap: 9px; padding-left: 4px; text-align: left; line-height: 13px; overflow: hidden; width: 100%; }
.addicon { border: 1px solid #8c8f93; border-radius: 3px; background: #e0e2e5; }
.grid { flex: 1; overflow: hidden; border-left: 2px solid #8fabba; border-top: 1px solid #8fabba; background: #fff; }
.grid table { width: 100px; border-collapse: separate; border-spacing: 0; table-layout: fixed; font-size: 13px; }
.w0 { width: 35px; }
.w1 { width: 18px; }
.grid th { height: 23px; padding: 0 0 0 21px; font-weight: normal; font-size: 12px; text-align: left; background: #e4e9eb; border-bottom: 1px solid #a5b5bb; }
.grid td { height: 23px; padding: 0; vertical-align: middle; }
.grid th.c0, .grid td.c0 { padding: 0; background: #e4e9eb; border-bottom: 1px solid #a5b5bb; }
.grid td.c1 { padding: 1px 0 0 0; }
.grid td.c2 { padding: 0 0 3px 3px; }
.grid tr:nth-child(even) td:not(.c0) { background: #f7f8fe; }
.grid .hot td.c2 { background: #ffd700 !important; }
.grid .sel td.c0 { background: #dae6ef; }
.grid .sel td.c1 { background: #e4eefa !important; }
.grid .sel td.c2 { background: #e8d53c !important; color: #444; }
.hscroll { height: 20px; display: flex; gap: 2px; padding: 1px 0 2px 3px; background: #eff2f6; flex: none; overflow: hidden; }
.hscroll button, .vscroll button { width: 15px; height: 15px; justify-content: center; border: 1px solid #8b8e95; border-radius: 2px; background: #dfe3e8; }
.hscroll span { width: 80px; height: 15px; display: flex; align-items: center; padding-left: 36px; border: 1px solid #8b8e95; border-radius: 2px; background: linear-gradient(#eceef1, #bcc2cc); flex: none; }
.hscroll i, .thumb i { width: 5px; height: 5px; border-radius: 3px; background: #bfc4ca; }
.foot { height: 21px; flex: none; padding: 3px 0 0 3px; overflow: hidden; border-bottom: 1px solid #8fabba; background: linear-gradient(#a4b9c3, #eff2f6); }

.conv { display: flex; flex-direction: column; padding: 1px 0 24px 4px; border-right: 1px solid #8fabba; background: linear-gradient(#eff2f6, #eff2f6) 0 0 / 100% 566px no-repeat; }
.chan { display: flex; align-items: center; gap: 8px; padding: 2px; height: 27px; border-bottom: 2px solid #8fabba; border-top: 1px solid #8fabba; margin-top: 1px; }
.chan select { width: 186px; height: 20px; appearance: none; border: 1px solid #000; background: #fff; padding: 0 0 0 1px; }
.log { flex: 1; display: flex; border-left: 2px solid #8fabba; background: #fff; overflow: hidden; }
.msgs { flex: 1; padding: 4px 4px 0 5px; font: 12px/14px "DejaVu Sans", Verdana, sans-serif; font-stretch: normal; }
.msgs p { margin: 0 0 5px; padding-left: 4px; }
.msgs h4 { margin: 0 0 7px; padding: 0 5px; font-size: 13px; line-height: 18px; background: #ffe0e0; }
.vscroll { width: 20px; display: flex; flex-direction: column; gap: 2px; padding: 2px 2px 2px 1px; background: linear-gradient(90deg, #e6ebef, #fbfcfd); }
.thumb { width: 15px; height: 12px; margin-top: auto; display: flex; align-items: center; justify-content: center; border: 1px solid #a8abb0; border-radius: 2px; background: #eceef0; }
.send { display: flex; gap: 1px; margin-top: 4px; }
.send textarea { flex: 1; min-width: 0; height: 46px; resize: none; border: 1px solid #8fabba; background: linear-gradient(90deg, #e6ebef, #fff) right / 19px 100% no-repeat #fff; }
.send button { width: 54px; height: 44px; margin: 1px 2px 0 0; justify-content: center; border: 1px solid #909299; border-radius: 3px; background: #c8ccd4; color: #a0aab8; }

.status { height: 23px; margin-top: 1px; display: flex; justify-content: flex-end; align-items: stretch; padding: 2px 0; }
.status span { display: flex; align-items: center; }
.s { width: 25px; padding-left: 4px; border-left: 1px solid #9fb4bf; }
.status .live { width: 96px; }
.lang { width: 140px; padding-left: 2px; border-left: 1px solid #9fb4bf; }

.taskbar { height: 56px; display: flex; color: #fff; background: linear-gradient(#20222e 0, #20222e 1px, #62636e 2px, #42434f 12px, #232533 12px); }
.orb { width: 56px; align-self: flex-start; padding-left: 12px; }
.tmain { flex: 1; }
.quick { display: flex; gap: 10px; height: 32px; padding: 6px 0 0 3px; }
.quick button { height: 16px; }
.tasks { display: flex; gap: 5px; }
.tasks button { width: 155px; height: 20px; padding-left: 12px; gap: 2px; background: linear-gradient(#63646f, #3d3e4b 10px, #232533 10px); }
.tasks .cur { color: #14202c; background: linear-gradient(#6d8da0, #5c7f93); }
.tray { width: 54px; display: grid; grid-template-columns: repeat(3, 18px); grid-auto-rows: 18px; padding-top: 2px; }
.clock { width: 86px; padding: 2px 8px 0 0; display: flex; flex-direction: column; align-items: center; gap: 5px; }
</style>
